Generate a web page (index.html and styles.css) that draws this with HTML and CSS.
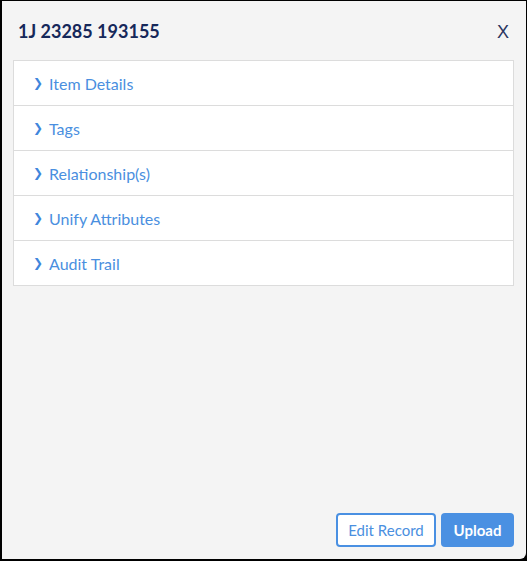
FILE: index.html
```html
<!DOCTYPE html>
<html lang="en">
<head>
  <meta charset="UTF-8" />
  <meta name="viewport" content="width=device-width, initial-scale=1.0"/>
  <title>Record</title>
  <link rel="stylesheet" href="styles.css">
</head>
<body>
  <div class="panel">
    <div class="panel-header">
      <h2>1J 23285 193155</h2>
      <button class="close" type="button">X</button>
    </div>

    <div class="accordion">
      <div class="acc-row"><span class="chev">&#x276F;</span>Item Details</div>
      <div class="acc-row"><span class="chev">&#x276F;</span>Tags</div>
      <div class="acc-row"><span class="chev">&#x276F;</span>Relationship(s)</div>
      <div class="acc-row"><span class="chev">&#x276F;</span>Unify Attributes</div>
      <div class="acc-row"><span class="chev">&#x276F;</span>Audit Trail</div>
    </div>

    <div class="panel-footer">
      <button class="btn btn-outline" type="button">Edit Record</button>
      <button class="btn btn-primary" type="button">Upload</button>
    </div>
  </div>
</body>
</html>
```

FILE: styles.css
```css
html, body {
  margin: 0;
  padding: 0;
  height: 561px;
  background: #000;
  overflow: hidden;
}

body {
  font-family: 'Lato', 'Noto Sans', sans-serif;
}

.panel {
  margin: 1px 1px 0 2px;
  height: 558px;
  background: #f4f4f4;
  border-bottom-right-radius: 6px;
  display: flex;
  flex-direction: column;
  box-sizing: border-box;
  padding: 0 12px 12px 11px;
}

.panel-header {
  height: 59px;
  display: flex;
  align-items: center;
  justify-content: space-between;
  padding-left: 5px;
}

.panel-header h2 {
  margin: 0;
  font-size: 18px;
  font-weight: 700;
  color: #16285a;
}

.close {
  background: none;
  border: none;
  color: #2a3560;
  font-family: 'Liberation Sans', sans-serif;
  font-size: 18px;
  line-height: 1;
  padding: 0;
  margin-right: 5px;
  margin-top: 2px;
  cursor: pointer;
}

.accordion {
  background: #fff;
  border: 1px solid #dcdcdc;
}

.acc-row {
  height: 44px;
  display: flex;
  align-items: center;
  padding-left: 19px;
  color: #4a8fe0;
  font-size: 16px;
  border-top: 1px solid #dcdcdc;
}

.acc-row:first-child {
  border-top: none;
}

.chev {
  font-family: 'DejaVu Sans', sans-serif;
  font-size: 12px;
  color: #3f86dc;
  width: 16px;
  margin-top: -1px;
}

.panel-footer {
  margin-top: auto;
  display: flex;
  justify-content: flex-end;
  gap: 5px;
}

.btn {
  height: 34px;
  font-family: inherit;
  font-size: 15px;
  border-radius: 4px;
  cursor: pointer;
}

.btn-outline {
  width: 100px;
  background: #fff;
  border: 2px solid #4a90e2;
  color: #4a8fe0;
}

.btn-primary {
  width: 73px;
  background: #4a90e2;
  border: none;
  color: #fff;
  font-weight: 700;
}
```
